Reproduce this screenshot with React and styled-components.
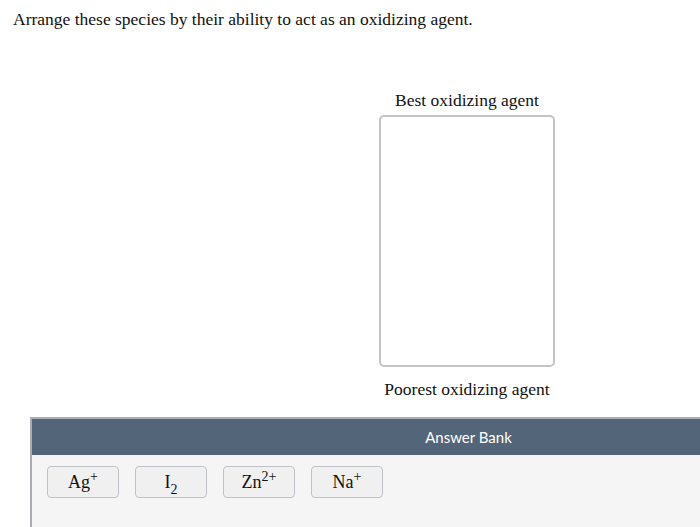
import React from 'react'
import styled, { createGlobalStyle } from 'styled-components'

const GlobalStyle = createGlobalStyle`
  html, body {
    margin: 0;
    padding: 0;
    background: #ffffff;
    overflow: hidden;
  }
  body {
    font-family: 'Liberation Serif', 'Times New Roman', serif;
    color: #111111;
  }
`

const Page = styled.div`
  width: 700px;
  height: 527px;
  overflow: hidden;
  display: flex;
  flex-direction: column;
`

const Prompt = styled.p`
  margin: 0;
  padding: 9px 0 0 13px;
  font-size: 17.5px;
  line-height: 20px;
`

const RankArea = styled.div`
  display: flex;
  flex-direction: column;
  align-items: center;
  width: 176px;
  margin: 61px 0 0 379px;
`

const RankLabel = styled.div`
  font-size: 17.5px;
  line-height: 20px;
  white-space: nowrap;
  margin: ${props => props.top ? '0 0 5px' : '12px 0 0'};
`

const DropBox = styled.div`
  box-sizing: border-box;
  width: 176px;
  height: 252px;
  border: 2px solid #c4c4c4;
  border-radius: 5px;
  background: #ffffff;
`

const Bank = styled.div`
  box-sizing: border-box;
  width: 875px;
  margin: 18px 0 0 30px;
  border-top: 2px solid #a9adb2;
  border-left: 2px solid #a9adb2;
  background: #f5f5f5;
  flex: 1;
`

const BankHeader = styled.div`
  height: 36px;
  background: #536579;
  color: #ffffff;
  font-family: Lato, 'Open Sans', sans-serif;
  font-size: 15px;
  display: flex;
  align-items: center;
  justify-content: center;
`

const Tiles = styled.div`
  display: flex;
  gap: 16px;
  padding: 11px 0 0 15px;
`

const Tile = styled.div`
  box-sizing: border-box;
  width: 72px;
  height: 32px;
  border: 1px solid #bfc3c7;
  border-radius: 4px;
  background: #f0f0f1;
  font-size: 18px;
  display: flex;
  align-items: center;
  justify-content: center;
`

const Formula = styled.span`
  line-height: 20px;
  white-space: nowrap;
`

const Sup = styled.sup`
  font-size: 14px;
  line-height: 0;
  vertical-align: 7px;
`

const Sub = styled.sub`
  font-size: 14px;
  line-height: 0;
  vertical-align: -6px;
`

const species = [
  { base: 'Ag', sup: '+' },
  { base: 'I', sub: '2' },
  { base: 'Zn', sup: '2+' },
  { base: 'Na', sup: '+' }
]

export default function App () {
  return (
    <Page>
      <GlobalStyle />
      <Prompt>Arrange these species by their ability to act as an oxidizing agent.</Prompt>
      <RankArea>
        <RankLabel top>Best oxidizing agent</RankLabel>
        <DropBox />
        <RankLabel>Poorest oxidizing agent</RankLabel>
      </RankArea>
      <Bank>
        <BankHeader>Answer Bank</BankHeader>
        <Tiles>
          {species.map(s => (
            <Tile key={s.base}>
              <Formula>
                {s.base}
                {s.sup && <Sup>{s.sup}</Sup>}
                {s.sub && <Sub>{s.sub}</Sub>}
              </Formula>
            </Tile>
          ))}
        </Tiles>
      </Bank>
    </Page>
  )
}
